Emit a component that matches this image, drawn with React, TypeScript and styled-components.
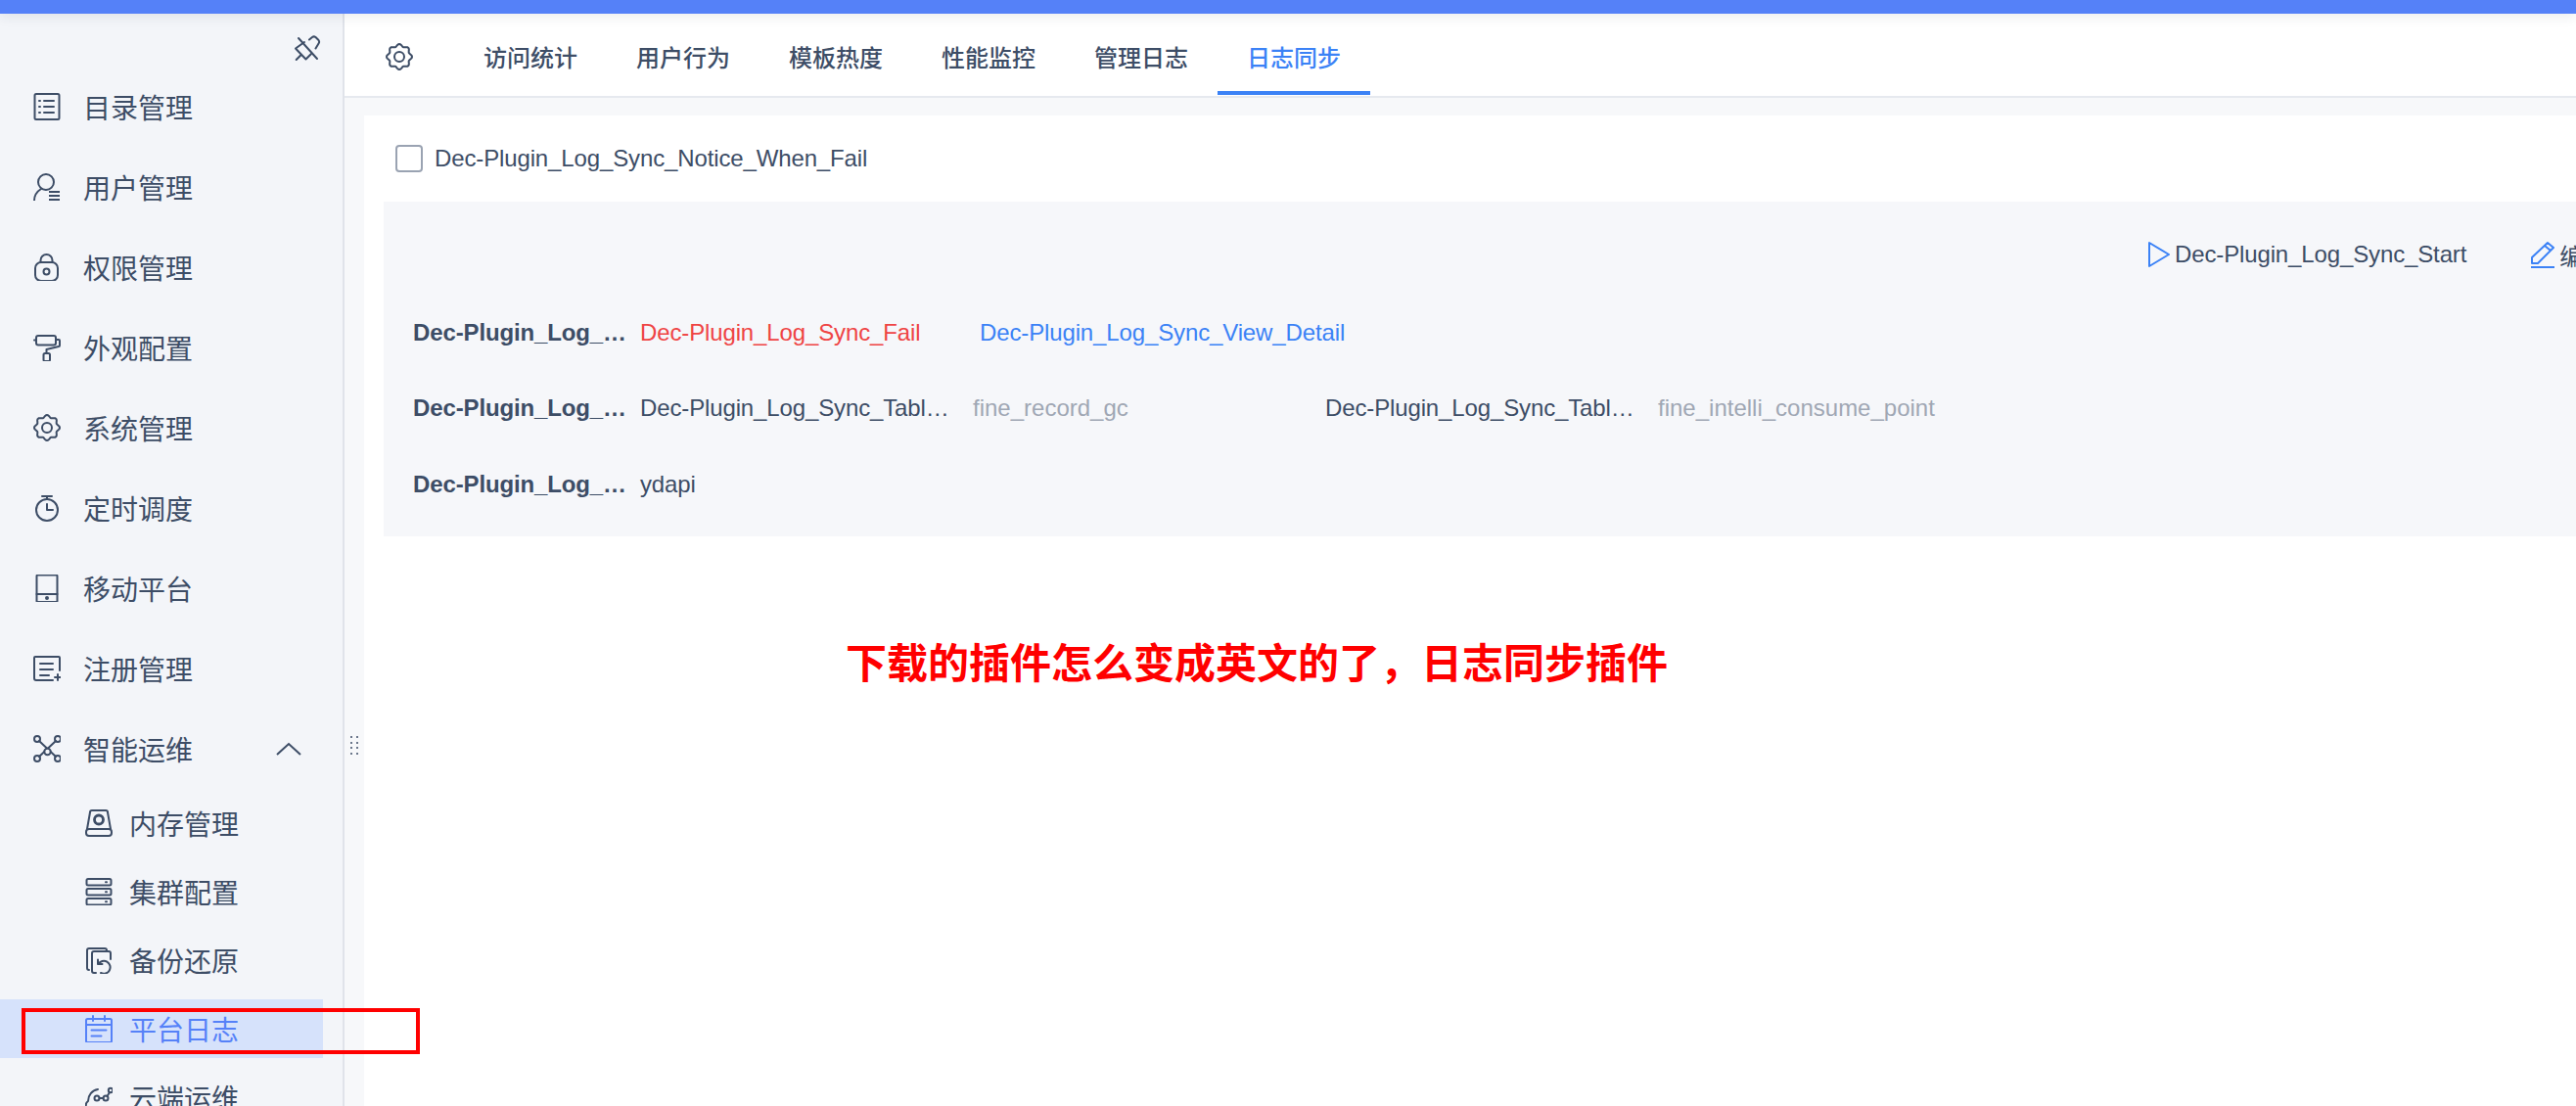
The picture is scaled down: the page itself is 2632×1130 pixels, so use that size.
import React from 'react';
import styled, { createGlobalStyle } from 'styled-components';

const GlobalStyle = createGlobalStyle`
  html, body {
    margin: 0;
    padding: 0;
    height: 100%;
    overflow: hidden;
    background: #fff;
    font-family: "Liberation Sans", "Noto Sans CJK SC", sans-serif;
  }
`;

const Page = styled.div`
  position: relative;
  width: 2632px;
  height: 1130px;
  overflow: hidden;
  display: flex;
  flex-direction: column;
  color: #3d4d66;
`;

const TopBar = styled.div`
  flex: none;
  height: 14px;
  background: #5581f8;
  box-shadow: 0 2px 14px rgba(40, 50, 70, 0.1);
  position: relative;
  z-index: 2;
`;

const Body = styled.div`
  flex: 1;
  display: flex;
  min-height: 0;
`;

const Sidebar = styled.aside`
  flex: none;
  width: 352px;
  box-sizing: border-box;
  background: #f3f5f9;
  border-right: 2px solid #e0e3ea;
  display: flex;
  flex-direction: column;
`;

const PinRow = styled.div`
  flex: none;
  height: 54px;
  display: flex;
  justify-content: flex-end;
  box-sizing: border-box;
  padding: 22px 22px 4px 0;
  color: #3d4d66;
`;

const Menu = styled.nav`
  display: flex;
  flex-direction: column;
`;

const MenuItem = styled.div`
  flex: none;
  height: 82px;
  display: flex;
  align-items: center;
  padding-left: 34px;
  gap: 23px;
  font-size: 28px;
  color: #3d4d66;
`;

const Chevron = styled.span`
  margin-left: auto;
  margin-right: 42px;
  display: flex;
`;

const SubMenu = styled.div`
  display: flex;
  flex-direction: column;
`;

const SubItem = styled.div<{ $active?: boolean }>`
  flex: none;
  width: 330px;
  height: 60px;
  margin: 5px 0;
  display: flex;
  align-items: center;
  box-sizing: border-box;
  padding-left: 87px;
  gap: 17px;
  font-size: 28px;
  color: ${(p) => (p.$active ? '#5581f8' : '#3d4d66')};
  background: ${(p) => (p.$active ? '#d6e2fb' : 'transparent')};
`;

const Main = styled.main`
  flex: 1;
  min-width: 0;
  display: flex;
  flex-direction: column;
  background: #f7f8fa;
`;

const TabBar = styled.div`
  flex: none;
  height: 86px;
  box-sizing: border-box;
  background: #fff;
  border-bottom: 2px solid #e6e9ef;
  display: flex;
  align-items: stretch;
  padding-left: 42px;
`;

const GearWrap = styled.div`
  flex: none;
  width: 70px;
  display: flex;
  align-items: center;
  margin-top: 4px;
  color: #3d4d66;
`;

const Tab = styled.div<{ $active?: boolean }>`
  flex: none;
  width: 156px;
  display: flex;
  align-items: center;
  justify-content: center;
  padding-top: 8px;
  box-sizing: border-box;
  font-size: 24px;
  font-weight: 500;
  color: ${(p) => (p.$active ? '#3b82f6' : '#3d4d66')};
  border-bottom: 4px solid ${(p) => (p.$active ? '#3b82f6' : 'transparent')};
  margin-bottom: 1px;
`;

const Content = styled.div`
  flex: 1;
  min-height: 0;
  margin: 18px 0 0 20px;
  background: #fff;
  display: flex;
  flex-direction: column;
`;

const NoticeRow = styled.label`
  flex: none;
  height: 88px;
  display: flex;
  align-items: center;
  padding-left: 32px;
  gap: 12px;
  font-size: 24px;
  letter-spacing: -0.13px;
  color: #3d4d66;
`;

const CheckBox = styled.span`
  flex: none;
  width: 28px;
  height: 28px;
  box-sizing: border-box;
  border: 2px solid #9aa3b2;
  border-radius: 4px;
  background: #fff;
`;

const Block = styled.section`
  flex: none;
  height: 342px;
  margin-left: 20px;
  background: #f6f7fa;
  display: flex;
  flex-direction: column;
  padding: 32px 0 0 30px;
  box-sizing: border-box;
  letter-spacing: -0.13px;
`;

const Actions = styled.div`
  flex: none;
  height: 44px;
  display: flex;
  align-items: center;
  margin-left: 1772px;
  gap: 65px;
  white-space: nowrap;
  font-size: 24px;
`;

const Action = styled.span`
  display: flex;
  align-items: center;
  gap: 4px;
  color: #3d4d66;
`;

const Rows = styled.div`
  margin-top: 19px;
  display: flex;
  flex-direction: column;
`;

const Row = styled.div`
  height: 77.5px;
  display: flex;
  align-items: center;
  font-size: 24px;
  white-space: nowrap;
`;

const Label = styled.span`
  flex: none;
  width: 232px;
  font-weight: 700;
  color: #3d4d66;
`;

const Cell = styled.span<{ $color?: string; $width?: number }>`
  flex: none;
  ${(p) => (p.$width ? `width: ${p.$width}px;` : '')}
  color: ${(p) => p.$color || '#3d4d66'};
`;

const MutedCell = styled(Cell)`
  color: #a0a7b4;
  letter-spacing: 0;
`;

const Annotation = styled.div`
  position: absolute;
  left: 864px;
  top: 653px;
  font-size: 42px;
  line-height: 52px;
  font-weight: 700;
  color: #ff0000;
  white-space: nowrap;
`;

const RedBox = styled.div`
  position: absolute;
  left: 22px;
  top: 1030px;
  width: 407px;
  height: 47px;
  box-sizing: border-box;
  border: 4px solid #ff0000;
`;

const Grip = styled.div`
  position: absolute;
  left: 358px;
  top: 752px;
  width: 8px;
  height: 24px;
  display: grid;
  grid-template-columns: repeat(2, 2px);
  grid-auto-rows: 2px;
  column-gap: 4px;
  row-gap: 3.5px;
  i {
    background: #3d4d66;
    border-radius: 50%;
  }
`;

const Ic: React.FC<{ children: React.ReactNode }> = ({ children }) => (
  <svg
    width={28}
    height={28}
    viewBox="0 0 28 28"
    fill="none"
    stroke="currentColor"
    strokeWidth="2"
    strokeLinecap="round"
    strokeLinejoin="round"
    style={{ flex: 'none' }}
  >
    {children}
  </svg>
);

// wavy gear outline, 8 soft teeth
const gearPath = (() => {
  const pts: string[] = [];
  for (let i = 0; i < 96; i++) {
    const a = (i / 96) * Math.PI * 2;
    const r = 11.8 + 1.2 * Math.cos(a * 8);
    pts.push(`${(14 + r * Math.cos(a)).toFixed(2)} ${(14 + r * Math.sin(a)).toFixed(2)}`);
  }
  return `M${pts.join('L')}Z`;
})();

const icons: Record<string, React.ReactNode> = {
  catalog: (
    <>
      <rect x="1.5" y="1" width="25" height="26" rx="1.5" />
      <path d="M11 8h10M11 14h10M11 20h10M6 8h1M6 14h1M6 20h1" />
    </>
  ),
  user: (
    <>
      <circle cx="13" cy="9" r="8" />
      <path d="M1 28c0-6 3-9.500 7-12" />
      <path d="M16 19h11M16 23h11M16 27h11" strokeLinecap="butt" />
    </>
  ),
  lock: (
    <>
      <rect x="2" y="9" width="23" height="19" rx="6" />
      <path d="M7.5 9V7a6 6 0 0 1 12 0v2" />
      <circle cx="13.5" cy="18.500" r="3" />
    </>
  ),
  paint: (
    <>
      <rect x="3" y="2" width="20" height="9.500" rx="2" />
      <path d="M1 6.500h2M23 6h3a1 1 0 0 1 1 1v5a1 1 0 0 1-1 1l-12.500 3v4" />
      <rect x="10.500" y="20" width="6.500" height="8" rx="1.500" />
    </>
  ),
  gear: (
    <>
      <path d={gearPath} />
      <circle cx="14" cy="14" r="5" />
    </>
  ),
  timer: (
    <>
      <circle cx="14" cy="16" r="11" />
      <path d="M9 2h10M14 2v3M14 10v6h6" />
    </>
  ),
  tablet: (
    <>
      <rect x="3.500" y="0.500" width="21" height="27.500" rx="1" />
      <path d="M3.500 20h21" />
      <circle cx="14" cy="24" r="1" fill="currentColor" />
    </>
  ),
  register: (
    <>
      <path d="M20 26H3a2 2 0 0 1-2-2V3a1 1 0 0 1 1-1h24a1 1 0 0 1 1 1v13" />
      <path d="M7 9h13M7 15h13M7 21h9M22 23h6M25 20v6" />
    </>
  ),
  ops: (
    <>
      <path d="M6 6l17 16M23 6L6 22" />
      <circle cx="4" cy="4" r="3" />
      <circle cx="25" cy="4" r="3" />
      <circle cx="4" cy="24" r="3" />
      <circle cx="25" cy="24" r="3" />
      <circle cx="14.500" cy="17" r="3.200" fill="#f3f5f9" />
    </>
  ),
  memory: (
    <>
      <path d="M2 20L5 3a2 2 0 0 1 2-2h14a2 2 0 0 1 2 2l3 17" />
      <rect x="1" y="20" width="26" height="7" rx="3" />
      <circle cx="14" cy="10.500" r="4.500" strokeWidth="2.800" />
    </>
  ),
  cluster: (
    <>
      <rect x="1.500" y="1" width="25" height="6.500" rx="1.500" />
      <rect x="1.500" y="11" width="25" height="6.500" rx="1.500" />
      <rect x="1.500" y="21" width="25" height="6.500" rx="1.500" />
      <path d="M21 4.200h1M21 14.200h1M21 24.200h1" />
    </>
  ),
  backup: (
    <>
      <path d="M4 24a2 2 0 0 1-2-2V4a2 2 0 0 1 2-2h16a2 2 0 0 1 2 2" />
      <path d="M11 27H9a2 2 0 0 1-2-2V7a2 2 0 0 1 2-2h15a2 2 0 0 1 2 2v6" />
      <path d="M13.500 18A6.500 6.500 0 1 1 16 27" />
      <path d="M13 13.500V18h4.500" />
    </>
  ),
  calendar: (
    <>
      <rect x="1" y="4" width="26" height="24" rx="1.500" />
      <path d="M8 1v5M20 1v5M1 10h26M6.500 15.500h15M6.500 21.500h10" />
    </>
  ),
  cloud: (
    <>
      <path d="M3 27C0 24 0 20 3 18C3 12 7 7 13 6" />
      <circle cx="12" cy="15" r="2.500" />
      <circle cx="21" cy="15" r="2.500" />
      <circle cx="26" cy="7" r="2.200" />
      <path d="M14.500 15h4M22.500 13l2.500-4" />
    </>
  ),
};

const mainItems: [string, string][] = [
  ['catalog', '目录管理'],
  ['user', '用户管理'],
  ['lock', '权限管理'],
  ['paint', '外观配置'],
  ['gear', '系统管理'],
  ['timer', '定时调度'],
  ['tablet', '移动平台'],
  ['register', '注册管理'],
];

const subItems: [string, string][] = [
  ['memory', '内存管理'],
  ['cluster', '集群配置'],
  ['backup', '备份还原'],
  ['calendar', '平台日志'],
  ['cloud', '云端运维'],
];

const tabs = ['访问统计', '用户行为', '模板热度', '性能监控', '管理日志', '日志同步'];

const App: React.FC = () => (
  <Page>
    <GlobalStyle />
    <TopBar />
    <Body>
      <Sidebar>
        <PinRow>
          <Ic>
            <path d="M16 4.500l3-2.500a3 3 0 0 1 3.500 0l3 3a3 3 0 0 1 0 3.500l-3 5" />
            <path d="M11 7l-9 6.500 10.500 11 5.500-5.500M7.700 20l-5 5" />
            <path d="M5 3l19 21" />
          </Ic>
        </PinRow>
        <Menu>
          {mainItems.map(([icon, text]) => (
            <MenuItem key={text}>
              <Ic>{icons[icon]}</Ic>
              {text}
            </MenuItem>
          ))}
          <MenuItem>
            <Ic>{icons.ops}</Ic>
            智能运维
            <Chevron>
              <svg width="26" height="14" viewBox="0 0 26 14" fill="none" stroke="#3d4d66" strokeWidth="2">
                <path d="M1 13L13 2l12 11" />
              </svg>
            </Chevron>
          </MenuItem>
        </Menu>
        <SubMenu>
          {subItems.map(([icon, text]) => (
            <SubItem key={text} $active={text === '平台日志'}>
              <Ic>{icons[icon]}</Ic>
              {text}
            </SubItem>
          ))}
        </SubMenu>
      </Sidebar>
      <Main>
        <TabBar>
          <GearWrap>
            <Ic>{icons.gear}</Ic>
          </GearWrap>
          {tabs.map((t) => (
            <Tab key={t} $active={t === '日志同步'}>
              {t}
            </Tab>
          ))}
        </TabBar>
        <Content>
          <NoticeRow>
            <CheckBox />
            Dec-Plugin_Log_Sync_Notice_When_Fail
          </NoticeRow>
          <Block>
            <Actions>
              <Action>
                <svg width="24" height="28" viewBox="0 0 24 28" fill="none" stroke="#3b82f6" strokeWidth="2" strokeLinejoin="round">
                  <path d="M2 2v24l20-12z" />
                </svg>
                Dec-Plugin_Log_Sync_Start
              </Action>
              <Action>
                <svg width="26" height="28" viewBox="0 0 26 28" fill="none" stroke="#3b82f6" strokeWidth="2" strokeLinejoin="round">
                  <path d="M2 23v-6L18 2l6 5-16 16zM15 5l6 5M1 27h24" />
                </svg>
                编辑
              </Action>
            </Actions>
            <Rows>
              <Row>
                <Label>Dec-Plugin_Log_…</Label>
                <Cell $color="#ef4444" $width={347}>Dec-Plugin_Log_Sync_Fail</Cell>
                <Cell $color="#3b82f6">Dec-Plugin_Log_Sync_View_Detail</Cell>
              </Row>
              <Row>
                <Label>Dec-Plugin_Log_…</Label>
                <Cell $width={340}>Dec-Plugin_Log_Sync_Tabl…</Cell>
                <MutedCell $width={360}>fine_record_gc</MutedCell>
                <Cell $width={340}>Dec-Plugin_Log_Sync_Tabl…</Cell>
                <MutedCell>fine_intelli_consume_point</MutedCell>
              </Row>
              <Row>
                <Label>Dec-Plugin_Log_…</Label>
                <Cell>ydapi</Cell>
              </Row>
            </Rows>
          </Block>
        </Content>
      </Main>
    </Body>
    <Annotation>下载的插件怎么变成英文的了，日志同步插件</Annotation>
    <RedBox />
    <Grip>
      {Array.from({ length: 8 }).map((_, i) => (
        <i key={i} />
      ))}
    </Grip>
  </Page>
);

export default App;
